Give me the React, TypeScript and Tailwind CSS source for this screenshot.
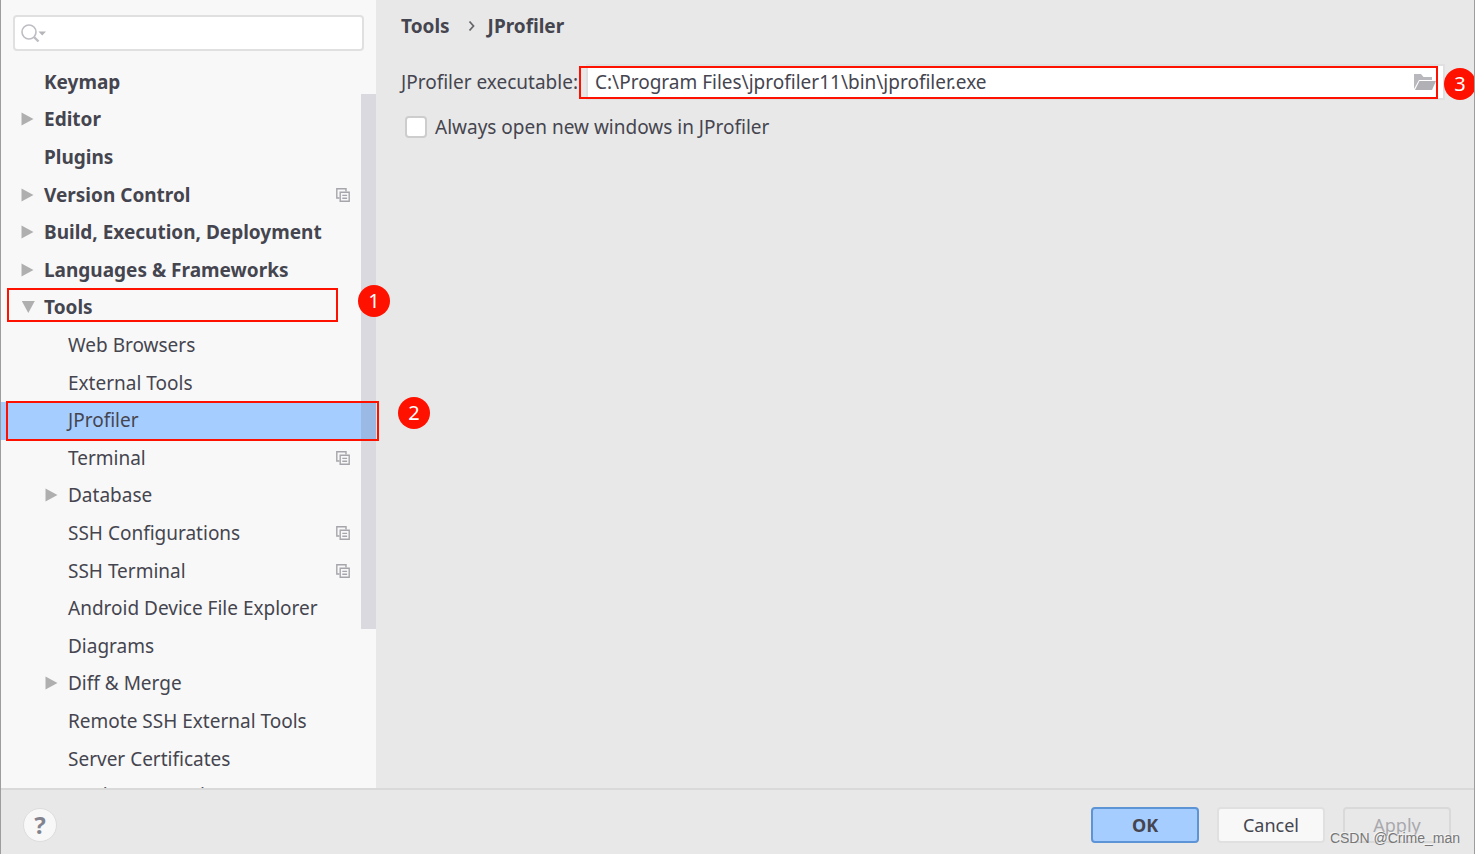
interface TreeItem {
  label: string
  level: 0 | 1
  arrow?: "right" | "down"
  projectLevel?: boolean
  selected?: boolean
  step?: number
}

const items: TreeItem[] = [
  { label: "Keymap", level: 0 },
  { label: "Editor", level: 0, arrow: "right" },
  { label: "Plugins", level: 0 },
  { label: "Version Control", level: 0, arrow: "right", projectLevel: true },
  { label: "Build, Execution, Deployment", level: 0, arrow: "right" },
  { label: "Languages & Frameworks", level: 0, arrow: "right" },
  { label: "Tools", level: 0, arrow: "down", step: 1 },
  { label: "Web Browsers", level: 1 },
  { label: "External Tools", level: 1 },
  { label: "JProfiler", level: 1, selected: true, step: 2 },
  { label: "Terminal", level: 1, projectLevel: true },
  { label: "Database", level: 1, arrow: "right" },
  { label: "SSH Configurations", level: 1, projectLevel: true },
  { label: "SSH Terminal", level: 1, projectLevel: true },
  { label: "Android Device File Explorer", level: 1 },
  { label: "Diagrams", level: 1 },
  { label: "Diff & Merge", level: 1, arrow: "right" },
  { label: "Remote SSH External Tools", level: 1 },
  { label: "Server Certificates", level: 1 },
  { label: "Settings Repository", level: 1 },
]

function Arrow({ direction }: { direction?: "right" | "down" }) {
  return (
    <svg width="14" height="14" viewBox="0 0 14 14" className="shrink-0" fill="#afafaf" aria-hidden="true">
      {direction === "right" && <path d="M.5 0.5 12.500 7 .5 13.5z" />}
      {direction === "down" && <path d="M.8 1h13L7.300 13z" />}
    </svg>
  )
}

function ProjectIcon() {
  return (
    <svg width="14" height="14" viewBox="0 0 14 14" fill="none" stroke="#a5a5ab" strokeWidth="1.4" aria-label="For current project">
      <path d="M3.500 10H.8V.8H10v2.700" />
      <path d="M4.200 4.200h9v9h-9z" />
      <path d="M6.300 7.400h4.800M6.300 10.200h4.800" />
    </svg>
  )
}

function StepBadge({ step, className }: { step: number; className: string }) {
  return (
    <span
      className={`absolute z-20 flex size-8 items-center justify-center rounded-full bg-[#ff1100] text-xl leading-8 font-normal text-white ${className}`}
    >
      {step}
    </span>
  )
}

function TreeRow({ item }: { item: TreeItem }) {
  return (
    <li
      role="treeitem"
      aria-selected={item.selected ?? false}
      className={`relative flex items-center pr-[26px] pb-0.5 last:pb-1 ${item.level === 0 ? "pl-5 font-bold" : "pl-11"} ${
        item.selected ? "bg-[#a6cdff]" : ""
      }`}
    >
      <Arrow direction={item.arrow} />
      <span className="ml-[9px] flex-1 whitespace-nowrap">{item.label}</span>
      {item.projectLevel && <ProjectIcon />}
      {item.step === 1 && (
        <>
          <span className="absolute -top-0.5 right-[38px] left-1.5 z-20 h-[34px] border-2 border-[#ff1100]" />
          <StepBadge step={1} className="-top-[5px] -right-3.5" />
        </>
      )}
      {item.step === 2 && (
        <>
          <span className="absolute -top-px -right-[3px] left-[5px] z-20 h-10 border-2 border-[#ff1100]" />
          <StepBadge step={2} className="-top-[5px] -right-[54px]" />
        </>
      )}
    </li>
  )
}

function Sidebar() {
  return (
    <aside className="relative z-10 flex w-[375px] shrink-0 flex-col bg-[#f8f8f8]">
      <div className="px-3 pt-[15px] pb-[13px]">
        <label className="flex h-9 items-center rounded border-2 border-[#e0e0e0] bg-white pl-1.5">
          <svg width="26" height="20" viewBox="0 0 26 20" fill="none" stroke="#bdbdc3" strokeWidth="1.6" aria-hidden="true">
            <circle cx="8" cy="9" r="7" />
            <path d="m13 14 4.500 4.500" strokeWidth="2.400" />
            <path d="M17.500 8.500H25L21.200 12.500z" fill="#b4b4b9" stroke="none" />
          </svg>
          <input type="text" aria-label="Search settings" className="min-w-0 flex-1 bg-transparent px-1 outline-none" />
        </label>
      </div>
      {/* clip-path keeps the markers visible beside the list while cutting its last row */}
      <div className="relative min-h-0 flex-1 [clip-path:inset(0_-80px_0_0)]">
        <ul role="tree" aria-label="Settings" className="grid h-[752px] auto-rows-fr">
          {items.map((item) => (
            <TreeRow key={item.label} item={item} />
          ))}
        </ul>
        <div className="absolute top-[30px] right-0 z-10 h-[535px] w-[15px] bg-[#7b7b94]/24" />
      </div>
    </aside>
  )
}

function FolderIcon() {
  return (
    <svg width="24" height="18" viewBox="0 0 24 18" aria-hidden="true">
      <path d="M1 16V1h7l2.500 3H19v3H6z" fill="#b9b9bd" />
      <path d="M6.500 8H23l-4 9H2z" fill="#b0b0b5" />
    </svg>
  )
}

function Content() {
  return (
    <main className="min-w-0 flex-1 pr-[29px] pl-[25px]">
      <nav aria-label="Breadcrumb" className="flex h-[51px] items-center font-bold">
        <a href="#tools">Tools</a>
        <svg width="8" height="14" viewBox="0 0 8 14" fill="none" stroke="#66666c" strokeWidth="1.800" className="mr-3 ml-[18px]" aria-hidden="true">
          <path d="M1.500 2.500 5.500 7 1.500 11.500" />
        </svg>
        <a href="#jprofiler">JProfiler</a>
      </nav>
      <div className="mt-[13px] flex items-center">
        <label htmlFor="executable" className="w-[185px] shrink-0 whitespace-nowrap">
          JProfiler executable:
        </label>
        <div className="relative flex h-9 flex-1 items-center border-2 border-[#e0e0e0] bg-white pr-1.5">
          <input
            id="executable"
            type="text"
            defaultValue="C:\Program Files\jprofiler11\bin\jprofiler.exe"
            className="min-w-0 flex-1 bg-transparent pb-px pl-[7px] outline-none"
          />
          <button type="button" aria-label="Browse">
            <FolderIcon />
          </button>
          <span className="pointer-events-none absolute top-0 right-[5px] bottom-[-1px] -left-[9px] border-2 border-[#ff1100]" />
          <StepBadge step={3} className="top-0.5 -right-[33px]" />
        </div>
      </div>
      <label className="mt-[15px] ml-1 flex items-center">
        <input
          type="checkbox"
          className="mr-2 size-[22px] appearance-none rounded-sm border-2 border-[#cdcdcd] bg-white checked:bg-[#a6cdff]"
        />
        Always open new windows in JProfiler
      </label>
    </main>
  )
}

function Footer() {
  return (
    <footer className="relative flex h-[66px] shrink-0 items-center justify-between border-t-2 border-[#d9d9d9] pt-[5px] pr-[23px] pl-[22px] text-lg">
      <button
        type="button"
        aria-label="Help"
        className="flex size-[34px] items-center justify-center rounded-full border border-[#dddddd] bg-[#f8f8f8] text-2xl font-bold text-[#83838f]"
      >
        ?
      </button>
      <div className="flex gap-[18px]">
        <button type="button" className="h-9 w-[108px] rounded border-2 border-[#5c94d6] bg-[#a6cdff] font-bold">
          OK
        </button>
        <button type="button" className="h-9 w-[108px] rounded border-2 border-[#e0e0e0] bg-[#f8f8f8]">
          Cancel
        </button>
        <button type="button" disabled className="h-9 w-[108px] rounded border-2 border-[#d9d9d9] text-[#a8a8ae]">
          Apply
        </button>
      </div>
      <span className="absolute right-3.5 bottom-1.5 font-['Liberation_Sans'] text-sm text-[#777777] [text-shadow:-1px_-1px_0_#f6f6f6]">
        CSDN @Crime_man
      </span>
    </footer>
  )
}

export default function App() {
  return (
    <div className="flex h-screen flex-col overflow-hidden border-x border-[#9d9d9d] bg-[#e8e8e8] font-['Noto_Sans',sans-serif] text-[19px] leading-6 text-[#45454f]">
      <div className="flex min-h-0 flex-1">
        <Sidebar />
        <Content />
      </div>
      <Footer />
    </div>
  )
}
